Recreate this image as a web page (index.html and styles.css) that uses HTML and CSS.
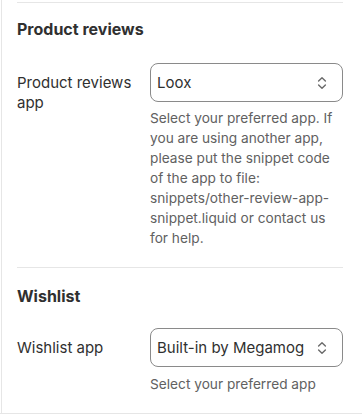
FILE: index.html
```html
<!DOCTYPE html>
<html lang="en">
<head>
<meta charset="utf-8">
<link rel="stylesheet" href="styles.css">
</head>
<body>
<div class="panel">
  <div class="rule"></div>
  <section class="section first">
    <h2 class="heading">Product reviews</h2>
    <div class="row">
      <label class="label">Product reviews app</label>
      <div class="field">
        <div class="select">
          <span class="value">Loox</span>
          <svg class="chev" viewBox="0 0 20 20" width="20" height="20"><path d="M6.6 8.1 10 4.7l3.4 3.4M6.6 11.9 10 15.3l3.4-3.4" fill="none" stroke="#6b6b6b" stroke-width="1.4" stroke-linecap="round" stroke-linejoin="round"/></svg>
        </div>
        <p class="help">Select your preferred app. If you are using another app, please put the snippet code of the app to file: snippets/other-review-app-snippet.liquid or contact us for help.</p>
      </div>
    </div>
  </section>
  <div class="rule"></div>
  <section class="section second">
    <h2 class="heading">Wishlist</h2>
    <div class="row single">
      <label class="label">Wishlist app</label>
      <div class="field">
        <div class="select">
          <span class="value">Built-in by Megamog</span>
          <svg class="chev" viewBox="0 0 20 20" width="20" height="20"><path d="M6.6 8.1 10 4.7l3.4 3.4M6.6 11.9 10 15.3l3.4-3.4" fill="none" stroke="#6b6b6b" stroke-width="1.4" stroke-linecap="round" stroke-linejoin="round"/></svg>
        </div>
        <p class="help">Select your preferred app</p>
      </div>
    </div>
  </section>
</div>
<div class="bottom"></div>
</body>
</html>
```

FILE: styles.css
```css
* { box-sizing: border-box; }
html, body { margin: 0; padding: 0; background: #ffffff; }
body {
  font-family: Inter, "Noto Sans", sans-serif;
  color: #303030;
  font-size: 15px;
  line-height: 20px;
}
.panel {
  margin-left: 1px;
  border-left: 1px solid #e6e6e6;
  padding-top: 2px;
  height: 413px;
}
.rule {
  height: 1px;
  background: #e6e6e6;
  margin: 0 19px 0 15px;
}
.section {
  padding: 16px 19px 19px 15px;
}
.section.second { padding-top: 18px; padding-bottom: 18px; }
.heading {
  margin: 0;
  font-size: 16px;
  font-weight: 650;
  line-height: 20px;
  color: #303030;
}
.row {
  display: grid;
  grid-template-columns: 133px 1fr;
  margin-top: 24px;
}
.section.second .row { margin-top: 22px; }
.label {
  padding-top: 10px;
  color: #303030;
  padding-right: 8px;
}
.field { min-width: 0; }
.select {
  height: 39px;
  border: 1px solid #8a8a8a;
  border-radius: 8px;
  display: flex;
  align-items: center;
  justify-content: space-between;
  padding: 0 10px 0 6px;
  color: #303030;
}
.value { white-space: nowrap; }
.chev { display: block; flex: none; }
.help {
  margin: 6px 0 0;
  color: #616161;
  font-size: 13.7px;
}
.section.second .help { margin-top: 7px; }
.bottom {
  height: 1px;
  background: #e6e6e6;
}
```
